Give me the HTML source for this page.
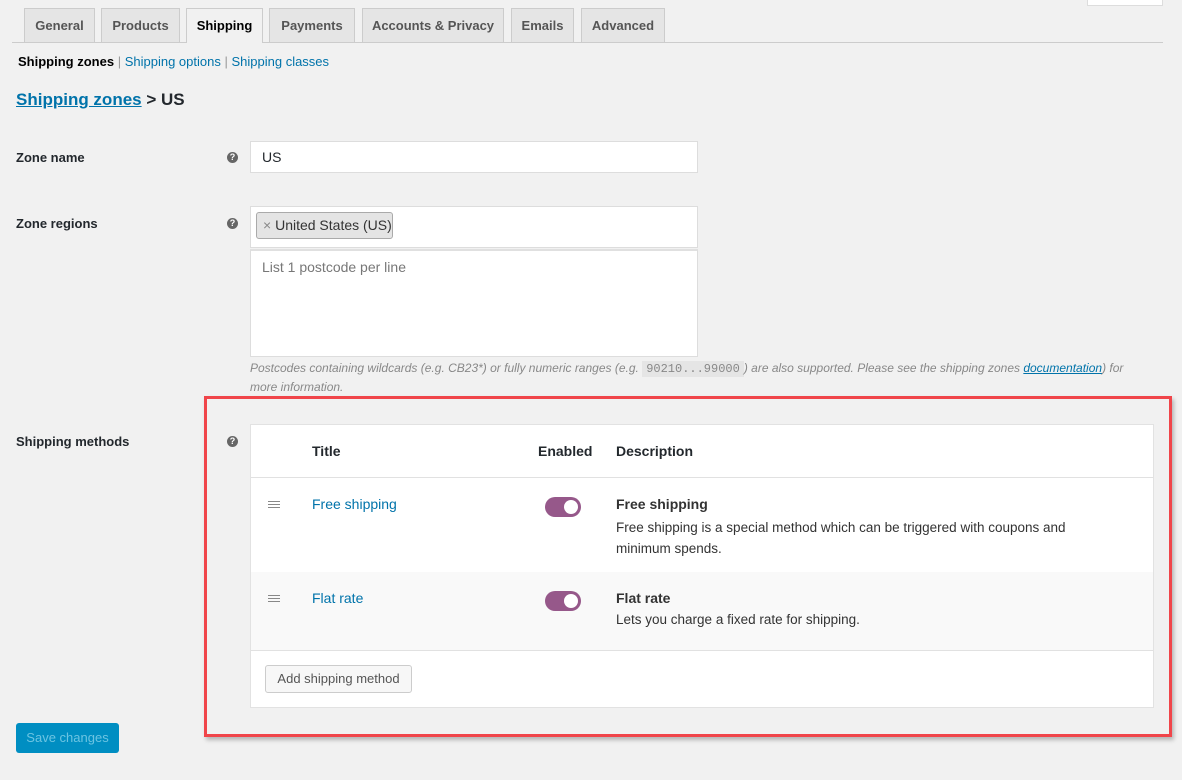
<!DOCTYPE html>
<html><head><meta charset="utf-8"><style>
*{box-sizing:border-box;margin:0;padding:0}
body{width:1182px;height:780px;background:#f1f1f1;font-family:"Liberation Sans",sans-serif;color:#23282d;position:relative;overflow:hidden;font-size:13px}
.a{position:absolute}
.tab{position:absolute;top:8px;height:34px;background:#e5e5e5;border:1px solid #ccc;border-bottom:none;font-size:13px;font-weight:600;color:#555;text-align:center;line-height:33px}
.tab.on{background:#f1f1f1;color:#000;height:35px}
.lbl{position:absolute;left:16px;font-size:13px;font-weight:600;color:#23282d}
.q{position:absolute;left:227px;width:11px;height:11px;border-radius:50%;background:#666;color:#fff;font-size:9px;font-weight:bold;text-align:center;line-height:11px}
a{color:#0073aa;text-decoration:none}
.tog{position:absolute;left:545px;width:36px;height:20px;border-radius:10px;background:#96588a}
.tog:after{content:"";position:absolute;right:3px;top:3px;width:14px;height:14px;border-radius:50%;background:#fff}
.ham{position:absolute;left:268px;width:12px;height:7px;border-top:1px solid #888;border-bottom:1px solid #888}
.ham:after{content:"";position:absolute;left:0;top:2px;width:12px;border-top:1px solid #888}
</style></head><body>
<div class="a" style="left:1087px;top:-2px;width:76px;height:8px;background:#fff;border:1px solid #ddd"></div>
<div class="a" style="left:12px;top:42px;width:1151px;height:1px;background:#ccc"></div>
<div class="tab" style="left:24px;width:71px">General</div>
<div class="tab" style="left:101px;width:79px">Products</div>
<div class="tab on" style="left:186px;width:77px">Shipping</div>
<div class="tab" style="left:269px;width:86px">Payments</div>
<div class="tab" style="left:362px;width:142px">Accounts &amp; Privacy</div>
<div class="tab" style="left:511px;width:63px">Emails</div>
<div class="tab" style="left:581px;width:84px">Advanced</div>
<div class="a" style="left:18px;top:54px;font-size:13px"><b style="font-weight:600;color:#000">Shipping zones</b> <span style="color:#999">|</span> <a>Shipping options</a> <span style="color:#999">|</span> <a>Shipping classes</a></div>
<div class="a" style="left:16px;top:90px;font-size:17px;font-weight:600"><a style="text-decoration:underline">Shipping zones</a> &gt; US</div>

<div class="lbl" style="top:150px">Zone name</div><div class="q" style="top:152px">?</div>
<div class="a" style="left:250px;top:141px;width:448px;height:32px;background:#fff;border:1px solid #ddd;padding-left:11px;line-height:30px;font-size:14px">US</div>

<div class="lbl" style="top:216px">Zone regions</div><div class="q" style="top:218px">?</div>
<div class="a" style="left:250px;top:206px;width:448px;height:42px;background:#fff;border:1px solid #ddd"></div>
<div class="a" style="left:256px;top:212px;width:137px;height:27px;background:#e4e4e4;border:1px solid #aaa;border-radius:3px;font-size:14px;line-height:25px;padding-left:6px;color:#333"><span style="color:#888">×</span> United States (US)</div>
<div class="a" style="left:250px;top:249px;width:448px;height:108px;background:#fff;border:1px solid #ddd;border-top:2px solid #e0e0e0;padding:8px 11px;font-size:14px;color:#777">List 1 postcode per line</div>
<div class="a" style="left:250px;top:359px;width:900px;font-size:12px;font-style:italic;color:#888;line-height:18px">Postcodes containing wildcards (e.g. CB23*) or fully numeric ranges (e.g. <span style="font-style:normal;font-family:'Liberation Mono',monospace;background:#e5e5e5;padding:1px 4px">90210...99000</span>) are also supported. Please see the shipping zones <a style="text-decoration:underline">documentation</a>) for more information.</div>

<div class="lbl" style="top:434px">Shipping methods</div><div class="q" style="top:436px">?</div>

<div class="a" style="left:204px;top:396px;width:968px;height:341px;border:3px solid #f0454a;box-shadow:2px 3px 4px rgba(0,0,0,.25)"></div>
<div class="a" style="left:250px;top:424px;width:904px;height:284px;background:#fff;border:1px solid #e2e2e2"></div>
<div class="a" style="left:251px;top:477px;width:902px;height:1px;background:#e1e1e1"></div>
<div class="a" style="left:251px;top:572px;width:902px;height:78px;background:#f9f9f9"></div>
<div class="a" style="left:251px;top:650px;width:902px;height:1px;background:#e1e1e1"></div>
<div class="a" style="left:312px;top:443px;font-size:14px;font-weight:600">Title</div>
<div class="a" style="left:538px;top:443px;font-size:14px;font-weight:600">Enabled</div>
<div class="a" style="left:616px;top:443px;font-size:14px;font-weight:600">Description</div>

<div class="ham" style="top:501px"></div>
<div class="a" style="left:312px;top:496px;font-size:14px"><a>Free shipping</a></div>
<div class="tog" style="top:497px"></div>
<div class="a" style="left:616px;top:496px;font-size:14px;font-weight:600;color:#333">Free shipping</div>
<div class="a" style="left:616px;top:517px;width:500px;font-size:13.5px;line-height:21px;color:#333">Free shipping is a special method which can be triggered with coupons and minimum spends.</div>

<div class="ham" style="top:595px"></div>
<div class="a" style="left:312px;top:590px;font-size:14px"><a>Flat rate</a></div>
<div class="tog" style="top:591px"></div>
<div class="a" style="left:616px;top:590px;font-size:14px;font-weight:600;color:#333">Flat rate</div>
<div class="a" style="left:616px;top:612px;font-size:13.5px;color:#333">Lets you charge a fixed rate for shipping.</div>

<div class="a" style="left:265px;top:665px;width:147px;height:28px;background:#f7f7f7;border:1px solid #ccc;border-radius:3px;font-size:13px;line-height:26px;text-align:center;color:#555">Add shipping method</div>

<div class="a" style="left:16px;top:723px;width:103px;height:30px;background:#008ec2;border-radius:3px;color:#6cc4e2;font-size:13px;line-height:30px;text-align:center">Save changes</div>
</body></html>
